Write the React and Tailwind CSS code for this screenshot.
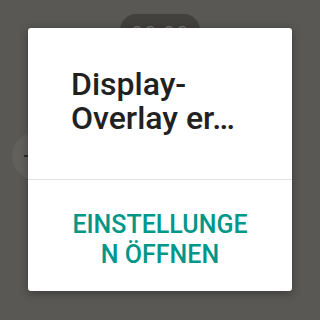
import React from 'react';

const App = () => {
  return (
    <div className="relative w-[320px] h-[320px] overflow-hidden bg-[#595854] p-[28px] pb-[29px] flex" style={{ fontFamily: 'Roboto, "Noto Sans", sans-serif' }}>
      {/* Screen behind the dim scrim */}
      <div className="absolute left-[120px] top-[14px] w-[80px] h-[40px] rounded-[16px] bg-[#42413e] flex justify-center pt-[10px]">
        <span className="text-[22px] leading-none font-light text-[#7a7974] tracking-[1px]">00:00</span>
      </div>
      <div className="absolute left-[12px] top-[132px] w-[48px] h-[48px] rounded-full bg-[#61605c] flex items-center pl-[12px]">
        <div className="w-[6px] h-[2px] bg-[#2a2a28]" />
      </div>

      {/* Dialog */}
      <div className="relative flex-1 bg-white rounded-[3px] shadow-[0_2px_10px_rgba(0,0,0,0.35)] flex flex-col">
        <div className="pl-[43px] pr-[20px] pt-[39px] pb-[44px] border-b border-[#e0e0e0]">
          <h1 className="text-[32px] leading-[34px] font-medium text-[#212121]">
            Display-
            <br />
            Overlay er…
          </h1>
        </div>
        <div className="pt-[30px] px-[16px] text-center">
          <span className="text-[25px] leading-[30px] font-medium text-[#009688]">
            EINSTELLUNGE
            <br />
            N ÖFFNEN
          </span>
        </div>
      </div>
    </div>
  );
};

export default App;
